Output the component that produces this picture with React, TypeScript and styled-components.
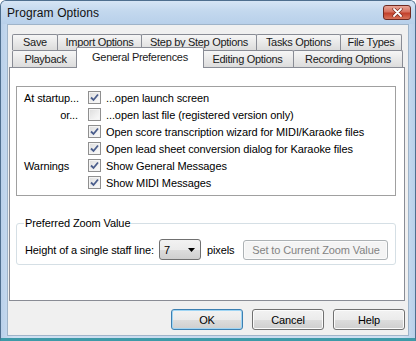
import React from 'react';
import styled, { createGlobalStyle } from 'styled-components';

const GlobalStyle = createGlobalStyle`
    html, body {
        margin: 0;
        padding: 0;
        overflow: hidden;
        background: #ffffff;
    }

    body {
        font-family: "Liberation Sans", Arial, sans-serif;
        font-size: 11px;
        letter-spacing: -0.1px;
        color: #000000;
    }
`;

const Window = styled.div`
    width: 416px;
    height: 341px;
    box-sizing: border-box;
    display: flex;
    flex-direction: column;
    background: linear-gradient(90deg, #b9d0ea 0%, #cfe0f2 3%, #c6d9ee 50%, #cfe0f2 97%, #b9d0ea 100%);
    border: 1px solid #4f6f8f;
    border-bottom: 3px solid #3e9aa8;
    border-radius: 6px 6px 0 0;
`;

const TitleBar = styled.div`
    height: 23px;
    flex: none;
    display: flex;
    align-items: center;
    justify-content: space-between;
    padding: 0 4px 0 6px;
    background: linear-gradient(180deg, #d6e5f5 0%, #c3d8ee 45%, #b8d0ea 100%);
    border-radius: 5px 5px 0 0;
`;

const Title = styled.span`
    font-size: 12px;
    color: #111111;
    letter-spacing: 0.1px;
`;

const CloseButton = styled.div`
    width: 28px;
    height: 15px;
    box-sizing: border-box;
    display: flex;
    align-items: center;
    justify-content: center;
    border: 1px solid #6e2a22;
    border-radius: 3px;
    background: linear-gradient(180deg, #e8a597 0%, #d6715f 45%, #c2402b 55%, #d8735a 100%);
`;

const Client = styled.div`
    flex: 1;
    margin: 0 6px 2px 6px;
    display: flex;
    flex-direction: column;
    background: #f0f0f0;
    border: 1px solid #9fb4c9;
    padding: 9px 3px 0 1px;
`;

const TabRow = styled.div<{ $front?: boolean }>`
    display: flex;
    height: ${(p) => (p.$front ? 17 : 16)}px;
    margin-left: 3px;
    position: relative;
`;

const Tab = styled.div<{ $w: number; $active?: boolean; $back?: boolean }>`
    width: ${(p) => p.$w + (p.$active ? 4 : 0)}px;
    flex: none;
    box-sizing: border-box;
    display: flex;
    align-items: center;
    justify-content: center;
    border: 1px solid #898c95;
    border-bottom: none;
    border-radius: 2px 2px 0 0;
    margin-right: -1px;
    white-space: nowrap;
    letter-spacing: -0.3px;
    color: #1a1a1a;
    padding-bottom: ${(p) => (p.$back ? 2 : 0)}px;
    background: ${(p) =>
        p.$active ? '#ffffff' : 'linear-gradient(180deg, #f6f6f6 0%, #e9e9e9 50%, #dcdcdc 100%)'};
    ${(p) =>
        p.$active
            ? `
        height: 21px;
        margin: -3px -3px -1px -2px;
        position: relative;
        z-index: 2;
        padding-bottom: 3px;
    `
            : 'height: 100%;'}
`;

const Panel = styled.div`
    height: 234px;
    box-sizing: border-box;
    border: 1px solid #898c95;
    background: #ffffff;
    display: flex;
    flex-direction: column;
`;

const StartupBox = styled.div`
    margin: 18px 8px 0 6px;
    border: 1px solid #a0a0a0;
    padding: 2px 0 4px 7px;
    display: grid;
    grid-template-columns: 54px 1fr;
    grid-auto-rows: 17px;
    column-gap: 10px;
    align-items: center;
`;

const RowLabel = styled.span<{ $right?: boolean }>`
    white-space: nowrap;
    text-align: ${(p) => (p.$right ? 'right' : 'left')};
`;

const Option = styled.label`
    display: flex;
    align-items: center;
    gap: 5px;
    white-space: nowrap;
`;

const Box = styled.span`
    width: 13px;
    height: 13px;
    box-sizing: border-box;
    flex: none;
    display: flex;
    align-items: center;
    justify-content: center;
    border: 1px solid #8f8f8f;
    background: linear-gradient(135deg, #dcdcdc 0%, #f0f0f0 60%, #fbfbfb 100%);
    box-shadow: inset 0 0 0 1px #f4f4f4;
`;

const ZoomGroup = styled.fieldset`
    margin: 21px 8px 0 6px;
    padding: 0 7px 4px 7px;
    border: 1px solid #d5dfe5;
    border-radius: 3px;
`;

const Legend = styled.legend`
    padding: 0 1px;
    line-height: 13px;
`;

const ZoomRow = styled.div`
    display: flex;
    align-items: center;
    height: 21px;
    margin-top: 9px;
    padding-left: 1px;
    white-space: nowrap;
`;

const Combo = styled.div`
    width: 42px;
    height: 21px;
    box-sizing: border-box;
    flex: none;
    margin: 0 6px 0 5px;
    display: flex;
    align-items: center;
    justify-content: space-between;
    padding: 0 5px 0 4px;
    border: 1px solid #707070;
    border-radius: 3px;
    background: linear-gradient(180deg, #f2f2f2 0%, #ebebeb 50%, #dddddd 51%, #cfcfcf 100%);
`;

const Button = styled.div<{ $w?: number; $primary?: boolean; $disabled?: boolean }>`
    width: ${(p) => p.$w ?? 72}px;
    height: ${(p) => (p.$disabled ? 20 : 21)}px;
    box-sizing: border-box;
    flex: none;
    display: flex;
    align-items: center;
    justify-content: center;
    border-radius: 3px;
    border: 1px solid ${(p) => (p.$primary ? '#3c7fb1' : p.$disabled ? '#adb2b5' : '#707070')};
    color: ${(p) => (p.$disabled ? '#838383' : '#000000')};
    background: ${(p) =>
        p.$disabled
            ? '#f4f4f4'
            : 'linear-gradient(180deg, #f2f2f2 0%, #ebebeb 50%, #dddddd 51%, #cfcfcf 100%)'};
    box-shadow: ${(p) => (p.$primary ? 'inset 0 0 0 1px #9fd5f4' : 'inset 0 0 0 1px #fbfbfb')};
    white-space: nowrap;
`;

const Footer = styled.div`
    display: flex;
    justify-content: flex-end;
    gap: 9px;
    margin-top: 8px;
`;

const Check = ({ checked }: { checked?: boolean }) => (
    <Box>
        {checked && (
            <svg width="9" height="9" viewBox="0 0 9 9">
                <path d="M1 4.5 L3.5 7 L8 1.5" fill="none" stroke="#4a5d8c" strokeWidth="1.8" />
            </svg>
        )}
    </Box>
);

const backTabs = [
    { label: 'Save', w: 46 },
    { label: 'Import Options', w: 85 },
    { label: 'Step by Step Options', w: 116 },
    { label: 'Tasks Options', w: 85 },
    { label: 'File Types', w: 62 },
];

const frontTabs = [
    { label: 'Playback', w: 67 },
    { label: 'General Preferences', w: 124, active: true },
    { label: 'Editing Options', w: 93 },
    { label: 'Recording Options', w: 110 },
];

const options = [
    { label: 'At startup...', text: '...open launch screen', checked: true },
    { label: 'or...', right: true, text: '...open last file (registered version only)', checked: false },
    { label: '', text: 'Open score transcription wizard for MIDI/Karaoke files', checked: true },
    { label: '', text: 'Open lead sheet conversion dialog for Karaoke files', checked: true },
    { label: 'Warnings', text: 'Show General Messages', checked: true },
    { label: '', text: 'Show MIDI Messages', checked: true },
];

const App = () => {
    return (
        <>
            <GlobalStyle />
            <Window>
                <TitleBar>
                    <Title>Program Options</Title>
                    <CloseButton>
                        <svg width="11" height="9" viewBox="0 0 11 9">
                            <path d="M2 1 L9 8 M9 1 L2 8" stroke="#7a2a20" strokeWidth="3.2" strokeLinecap="round" />
                            <path d="M2 1 L9 8 M9 1 L2 8" stroke="#ffffff" strokeWidth="1.8" strokeLinecap="round" />
                        </svg>
                    </CloseButton>
                </TitleBar>

                <Client>
                    <TabRow>
                        {backTabs.map((t) => (
                            <Tab key={t.label} $w={t.w} $back>{t.label}</Tab>
                        ))}
                    </TabRow>
                    <TabRow $front>
                        {frontTabs.map((t) => (
                            <Tab key={t.label} $w={t.w} $active={t.active}>{t.label}</Tab>
                        ))}
                    </TabRow>

                    <Panel>
                        <StartupBox>
                            {options.map((o) => (
                                <React.Fragment key={o.text}>
                                    <RowLabel $right={o.right}>{o.label}</RowLabel>
                                    <Option>
                                        <Check checked={o.checked} />
                                        {o.text}
                                    </Option>
                                </React.Fragment>
                            ))}
                        </StartupBox>

                        <ZoomGroup>
                            <Legend>Preferred Zoom Value</Legend>
                            <ZoomRow>
                                <span>Height of a single staff line:</span>
                                <Combo>
                                    <span>7</span>
                                    <svg width="7" height="4" viewBox="0 0 7 4">
                                        <path d="M0 0 L7 0 L3.5 4 Z" fill="#000000" />
                                    </svg>
                                </Combo>
                                <span>pixels</span>
                                <Button $w={145} $disabled style={{ marginLeft: 9 }}>
                                    Set to Current Zoom Value
                                </Button>
                            </ZoomRow>
                        </ZoomGroup>
                    </Panel>

                    <Footer>
                        <Button $primary>OK</Button>
                        <Button>Cancel</Button>
                        <Button>Help</Button>
                    </Footer>
                </Client>
            </Window>
        </>
    );
};

export default App;
